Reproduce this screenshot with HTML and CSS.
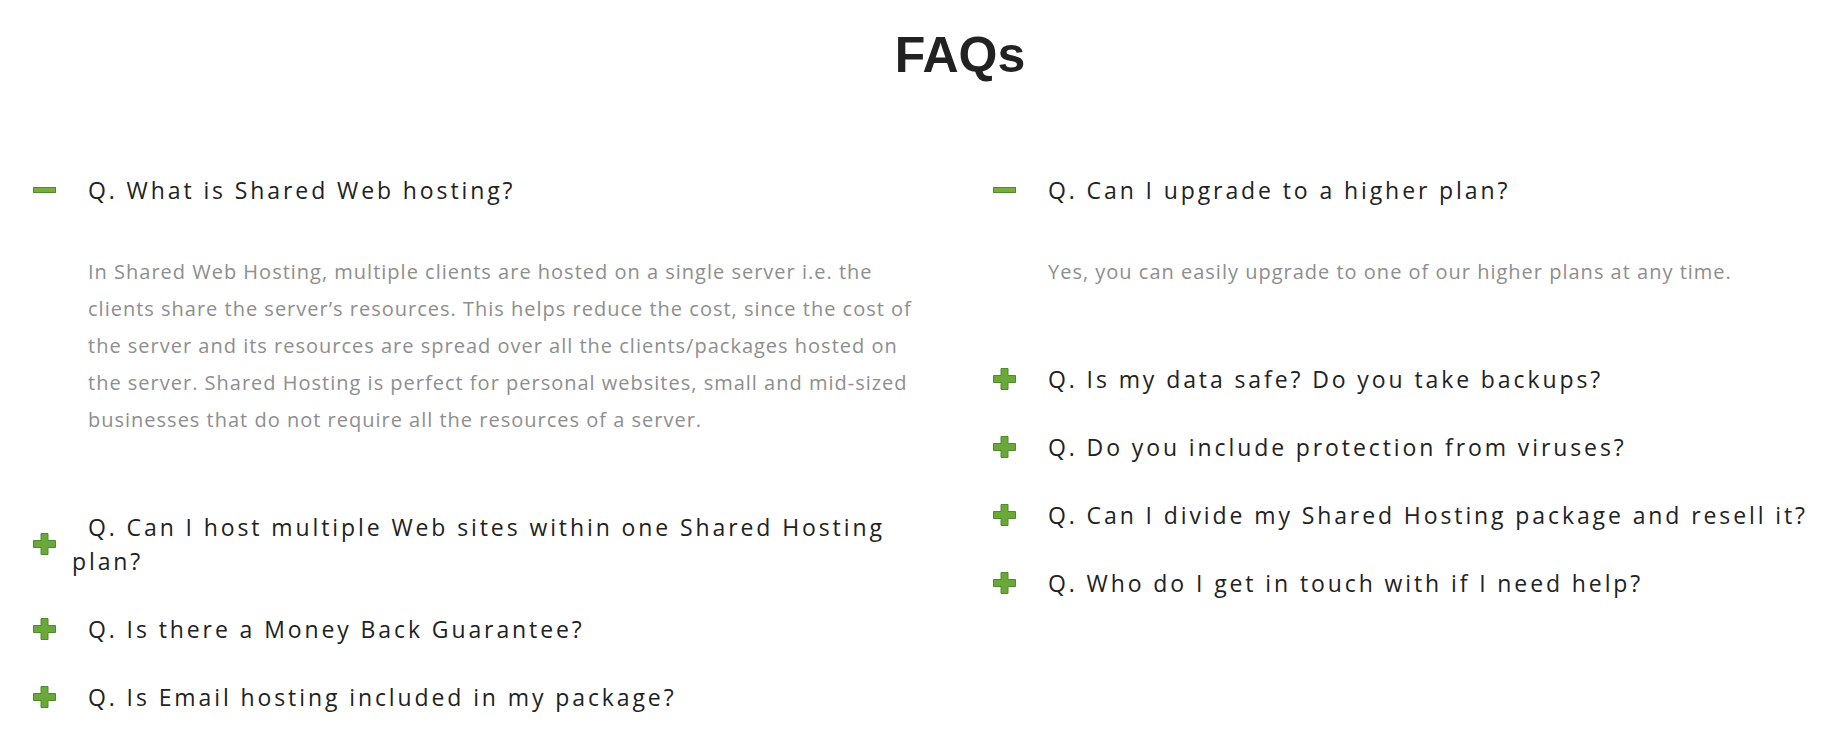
FILE: index.html
```html
<!DOCTYPE html>
<html lang="en">
<head>
  <meta charset="UTF-8">
  <meta name="viewport" content="width=device-width, initial-scale=1.0">
  <title>FAQs</title>
  <link rel="stylesheet" href="styles.css">
</head>
<body>
  <section class="faq-section">
    <h2 class="faq-title">FAQs</h2>

    <div class="faq-grid">
      <!-- Colonne gauche -->
      <div class="faq-col">
        <div class="faq-item open">
          <div class="faq-q">
            <svg class="faq-icon minus" width="23" height="6" viewBox="0 0 23 6"><rect x="0.5" y="0.5" width="22" height="5" fill="#75ad3f" stroke="#4f8a2b"/></svg>
            Q. What is Shared Web hosting?
          </div>
          <p class="faq-a">In Shared Web Hosting, multiple clients are hosted on a single server i.e. the clients share the server’s resources. This helps reduce the cost, since the cost of the server and its resources are spread over all the clients/packages hosted on the server. Shared Hosting is perfect for personal websites, small and mid-sized businesses that do not require all the resources of a server.</p>
        </div>

        <div class="faq-item">
          <div class="faq-q">
            <svg class="faq-icon plus" width="23" height="22" viewBox="0 0 23 22"><path d="M8 0.5H15V7.5H22.5V14.5H15V21.5H8V14.5H0.5V7.5H8Z" fill="#6ba83a" stroke="#4f8a2b"/></svg>
            Q. Can I host multiple Web sites within one Shared Hosting plan?
          </div>
        </div>

        <div class="faq-item">
          <div class="faq-q">
            <svg class="faq-icon plus" width="23" height="22" viewBox="0 0 23 22"><path d="M8 0.5H15V7.5H22.5V14.5H15V21.5H8V14.5H0.5V7.5H8Z" fill="#6ba83a" stroke="#4f8a2b"/></svg>
            Q. Is there a Money Back Guarantee?
          </div>
        </div>

        <div class="faq-item">
          <div class="faq-q">
            <svg class="faq-icon plus" width="23" height="22" viewBox="0 0 23 22"><path d="M8 0.5H15V7.5H22.5V14.5H15V21.5H8V14.5H0.5V7.5H8Z" fill="#6ba83a" stroke="#4f8a2b"/></svg>
            Q. Is Email hosting included in my package?
          </div>
        </div>
      </div>

      <!-- Colonne droite -->
      <div class="faq-col">
        <div class="faq-item open">
          <div class="faq-q">
            <svg class="faq-icon minus" width="23" height="6" viewBox="0 0 23 6"><rect x="0.5" y="0.5" width="22" height="5" fill="#75ad3f" stroke="#4f8a2b"/></svg>
            Q. Can I upgrade to a higher plan?
          </div>
          <p class="faq-a">Yes, you can easily upgrade to one of our higher plans at any time.</p>
        </div>

        <div class="faq-item">
          <div class="faq-q">
            <svg class="faq-icon plus" width="23" height="22" viewBox="0 0 23 22"><path d="M8 0.5H15V7.5H22.5V14.5H15V21.5H8V14.5H0.5V7.5H8Z" fill="#6ba83a" stroke="#4f8a2b"/></svg>
            Q. Is my data safe? Do you take backups?
          </div>
        </div>

        <div class="faq-item">
          <div class="faq-q">
            <svg class="faq-icon plus" width="23" height="22" viewBox="0 0 23 22"><path d="M8 0.5H15V7.5H22.5V14.5H15V21.5H8V14.5H0.5V7.5H8Z" fill="#6ba83a" stroke="#4f8a2b"/></svg>
            Q. Do you include protection from viruses?
          </div>
        </div>

        <div class="faq-item">
          <div class="faq-q">
            <svg class="faq-icon plus" width="23" height="22" viewBox="0 0 23 22"><path d="M8 0.5H15V7.5H22.5V14.5H15V21.5H8V14.5H0.5V7.5H8Z" fill="#6ba83a" stroke="#4f8a2b"/></svg>
            Q. Can I divide my Shared Hosting package and resell it?
          </div>
        </div>

        <div class="faq-item">
          <div class="faq-q">
            <svg class="faq-icon plus" width="23" height="22" viewBox="0 0 23 22"><path d="M8 0.5H15V7.5H22.5V14.5H15V21.5H8V14.5H0.5V7.5H8Z" fill="#6ba83a" stroke="#4f8a2b"/></svg>
            Q. Who do I get in touch with if I need help?
          </div>
        </div>
      </div>
    </div>
  </section>
</body>
</html>
```

FILE: styles.css
```css
/* Page blanche, section plus large que la fenêtre (comme l'original) */
body {
  margin: 0;
  padding: 0;
  background: #fff;
  overflow-x: hidden;
  font-family: "Open Sans", Arial, sans-serif;
}
.faq-section {
  width: 1920px;
  padding-top: 25px;
}
.faq-title {
  margin: 0 0 88px;
  text-align: center;
  font-family: "Liberation Sans", Arial, sans-serif;
  font-weight: bold;
  font-size: 50px;
  line-height: 60px;
  color: #222;
}
/* Deux colonnes de 960px */
.faq-grid {
  display: grid;
  grid-template-columns: 960px 960px;
}
.faq-col {
  padding: 0 33px;
}
.faq-item {
  position: relative;
  padding-left: 39px;
  margin-bottom: 34px;
}
.faq-q {
  font-size: 23px;
  line-height: 34px;
  letter-spacing: 2.9px;
  color: #222;
  text-indent: 16px;
}
/* Icône +/- centrée verticalement sur la question */
.faq-icon {
  position: absolute;
  left: 0;
  display: block;
}
.faq-icon.minus {
  top: 14px;
}
.faq-icon.plus {
  top: 50%;
  margin-top: -11px;
}
.faq-a {
  margin: 46px 0 0 16px;
  padding-bottom: 38px;
  font-size: 20px;
  line-height: 37px;
  letter-spacing: 1px;
  color: #8e8e8e;
}
```
